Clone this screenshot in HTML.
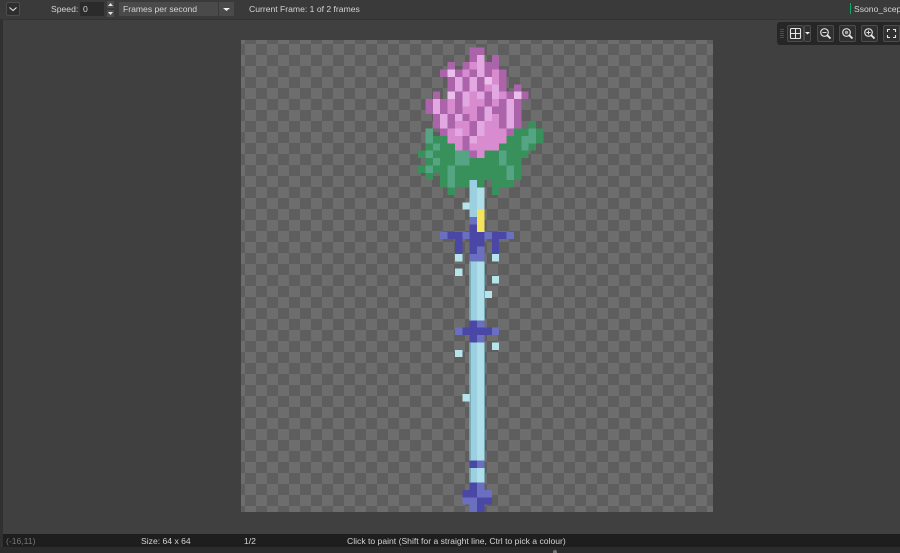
<!DOCTYPE html>
<html><head><meta charset="utf-8"><style>
html,body{margin:0;padding:0}
body{width:900px;height:553px;position:relative;overflow:hidden;background:#404040;font:8.6px "Liberation Sans",sans-serif;color:#d4d4d4}
.a{position:absolute}
.t{position:absolute;white-space:nowrap;line-height:12px}
.btn{position:absolute;box-sizing:border-box;border:1px solid #4c4c4c;border-radius:2px;background:#303030}
.e{position:absolute;width:1px;background:#7aabb8}
svg{position:absolute;display:block}
</style></head><body>
<div class="a" style="left:0;top:0;width:3px;height:553px;background:#303030"></div>
<div class="a" style="left:0;top:0;width:900px;height:19px;background:#3a3a3a"></div>
<div class="a" style="left:0;top:19px;width:900px;height:1px;background:#333"></div>

<div class="btn" style="left:6px;top:2px;width:14px;height:14px;background:#2e2e2e"></div>
<svg style="left:6px;top:2px" width="14" height="14"><path d="M3.500 5.500l3.500 3 3.500-3" fill="none" stroke="#e4e4e4" stroke-width="1.100"/></svg>
<div class="t" style="left:51px;top:3px">Speed:</div>
<div class="a" style="left:80px;top:2px;width:24px;height:14px;background:#2b2b2b;border-radius:1px"></div>
<div class="t" style="left:83px;top:3px">0</div>
<svg style="left:106px;top:1px" width="9" height="16"><rect x="1" width="7" height="7" y="0" fill="#4c4c4c"/><rect x="1" width="7" height="7" y="9" fill="#4c4c4c"/><path d="M2 5l2.500-3 2.500 3zM2 11h5l-2.500 3z" fill="#e4e4e4"/></svg>
<div class="a" style="left:119px;top:2px;width:99px;height:14px;background:#4a4a4a;border-radius:1px"></div>
<div class="t" style="left:123px;top:3px">Frames per second</div>
<div class="a" style="left:219px;top:2px;width:15px;height:14px;background:#4a4a4a;border-radius:1px"></div>
<svg style="left:219px;top:2px" width="15" height="14"><path d="M4 6h7L7.500 9z" fill="#eee"/></svg>
<div class="t" style="left:249px;top:3px">Current Frame: 1 of 2 frames</div>
<div class="a" style="left:850px;top:3px;width:1px;height:11px;background:#0fa86b"></div>
<div class="t" style="left:854px;top:3px">Ssono_sceptre</div>

<div class="a" style="left:777px;top:22px;width:123px;height:23px;background:#262626;border-radius:3px 0 0 3px"></div>
<svg style="left:780px;top:29px" width="4" height="9"><path d="M0 .5h4M0 2.500h4M0 4.500h4M0 6.500h4M0 8.500h4" stroke="#4c4c4c"/></svg>
<div class="btn" style="left:787px;top:25px;width:17px;height:17px"></div>
<div class="btn" style="left:804px;top:25px;width:7px;height:17px"></div>
<svg style="left:787px;top:25px" width="24" height="17"><rect x="3.500" y="3.500" width="10" height="10" rx="1" fill="none" stroke="#e6e6e6" stroke-width="1.100"/><path d="M8.500 3.500v10M3.500 8.500h10" fill="none" stroke="#e6e6e6" stroke-width="1.100"/><path d="M18 7h5l-2.500 2.500z" fill="#eee"/></svg>
<div class="btn" style="left:817px;top:25px;width:17px;height:17px"></div>
<div class="btn" style="left:839px;top:25px;width:17px;height:17px"></div>
<div class="btn" style="left:861px;top:25px;width:17px;height:17px"></div>
<div class="btn" style="left:883px;top:25px;width:17px;height:17px"></div>
<svg style="left:817px;top:25px" width="17" height="17"><circle cx="7.500" cy="7.500" r="3.800" fill="none" stroke="#ddd" stroke-width="1.200"/><path d="M10 10l3.500 3.500" stroke="#eee" stroke-width="1.800"/><path d="M5.500 7.500h4" stroke="#ddd"/></svg>
<svg style="left:839px;top:25px" width="17" height="17"><circle cx="7.500" cy="7.500" r="3.800" fill="none" stroke="#ddd" stroke-width="1.200"/><path d="M10 10l3.500 3.500" stroke="#eee" stroke-width="1.800"/><circle cx="7.500" cy="7.500" r="1.700" fill="#aaa"/></svg>
<svg style="left:861px;top:25px" width="17" height="17"><circle cx="7.500" cy="7.500" r="3.800" fill="none" stroke="#ddd" stroke-width="1.200"/><path d="M10 10l3.500 3.500" stroke="#eee" stroke-width="1.800"/><path d="M5.500 7.500h4M7.500 5.500v4" stroke="#ddd"/></svg>
<svg style="left:883px;top:25px" width="17" height="17"><path d="M4.500 7V4.500H7M10 4.500h2.500V7M12.500 10v2.500H10M7 12.500H4.500V10" fill="none" stroke="#e4e4e4" stroke-width="1.100"/></svg>

<div class="a" style="left:241px;top:40px;width:472px;height:472px;background:conic-gradient(#6d6d6d 25%,#5e5e5e 0 50%,#6d6d6d 0 75%,#5e5e5e 0) -7px 4px/22px 22px"></div>
<svg style="left:241px;top:40px;filter:blur(.35px)" width="472" height="472" viewBox="0 0 64 64" shape-rendering="crispEdges" fill="none" stroke-width="1">
<path stroke="#ab64a9" d="M31 1.500h2M31 2.500h1M34 2.500h1M28 3.500h1M30 3.500h1M33 3.500h2M27 4.500h1M29 4.500h1M31 4.500h1M33 4.500h1M35 4.500h1M28 5.500h1M30 5.500h1M32 5.500h1M35 5.500h1M28 6.500h1M30 6.500h1M32 6.500h1M35 6.500h1M37 6.500h1M26 7.500h1M29 7.500h1M33 7.500h1M36 7.500h1M38 7.500h1M25 8.500h1M27 8.500h1M29 8.500h1M33 8.500h1M35 8.500h1M37 8.500h1M25 9.500h1M27 9.500h1M29 9.500h1M32 9.500h1M34 9.500h2M37 9.500h1M26 10.500h1M28 10.500h1M30 10.500h1M32 10.500h1M35 10.500h1M37 10.500h1M26 11.500h1M28 11.500h1M31 11.500h1M35 11.500h1M37 11.500h1M27 12.500h1M31 12.500h1M36 12.500h1M30 13.500h1M30 14.500h1M31 15.500h1"/>
<path stroke="#d88ccf" d="M31 3.500h1M30 4.500h1M34 4.500h1M34 5.500h1M33 6.500h1M31 7.500h1M35 7.500h1M28 8.500h1M31 8.500h2M34 8.500h1M28 9.500h1M30 9.500h2M31 10.500h1M34 10.500h1M29 11.500h2M33 11.500h2M28 12.500h1M30 12.500h1M33 12.500h3M28 13.500h2M32 13.500h4M29 14.500h1M31 14.500h4M32 15.500h1"/>
<path stroke="#e2a8e2" d="M32 2.500h1M32 3.500h1M32 4.500h1M29 5.500h1M31 5.500h1M29 6.500h1M31 6.500h1M34 6.500h1M30 7.500h1M32 7.500h1M34 7.500h1M26 8.500h1M30 8.500h1M36 8.500h1M26 9.500h1M33 9.500h1M36 9.500h1M27 10.500h1M29 10.500h1M33 10.500h1M36 10.500h1M27 11.500h1M32 11.500h1M36 11.500h1M29 12.500h1M32 12.500h1M31 13.500h1"/>
<path stroke="#ebbfeb" d="M28 4.500h1M33 5.500h1M28 7.500h1M37 7.500h1"/>
<path stroke="#38905a" d="M39 11.500h1M37 12.500h2M40 12.500h1M26 13.500h2M36 13.500h2M40 13.500h1M25 14.500h1M27 14.500h2M35 14.500h3M39 14.500h1M24 15.500h1M26 15.500h3M33 15.500h2M36 15.500h3M25 16.500h1M27 16.500h2M31 16.500h4M36 16.500h2M24 17.500h1M26 17.500h2M29 17.500h7M37 17.500h1M25 18.500h1M27 18.500h1M29 18.500h7M37 18.500h1M27 19.500h1M29 19.500h2M32 19.500h1M34 19.500h3M28 20.500h1M34 20.500h1"/>
<path stroke="#55a585" d="M25 12.500h1M39 12.500h1M25 13.500h1M38 13.500h2M26 14.500h1M38 14.500h1M25 15.500h1M29 15.500h2M35 15.500h1M26 16.500h1M29 16.500h2M35 16.500h1M25 17.500h1M28 17.500h1M36 17.500h1M28 18.500h1M36 18.500h1M28 19.500h1"/>
<path stroke="#9ccfdf" d="M31.500 19v5M31.500 30v8M31.500 41v16M31.500 58v2"/>
<path stroke="#aedfe8" d="M32.500 20v3M32.500 30v8M32.500 41v16M32.500 58v2"/>
<path stroke="#b5e4ea" d="M30 22.500h1M29 29.500h1M34 29.500h1M29 31.500h1M34 32.500h1M33 34.500h1M34 41.500h1M29 42.500h1M30 48.500h1"/>
<path stroke="#f5e35c" d="M32.500 23v3"/>
<path stroke="#4a47a6" d="M31 25.500h1M28 26.500h2M31 26.500h2M34 26.500h2M29 27.500h1M31 27.500h2M34 27.500h1M29 28.500h1M31 28.500h1M34 28.500h1M31 38.500h1M30 39.500h4M31 40.500h1M31 57.500h1M31 60.500h1M30 61.500h2M32 62.500h2M32 63.500h1"/>
<path stroke="#6a70bf" d="M31 24.500h1M27 26.500h1M30 26.500h1M33 26.500h1M36 26.500h1M32 28.500h1M31 29.500h2M32 38.500h1M29 39.500h1M34 39.500h1M32 40.500h1M32 57.500h1M32 60.500h1M32 61.500h2M30 62.500h2M31 63.500h1"/>
</svg>
<div class="e" style="left:470px;top:262px;height:58px"></div>
<div class="e" style="left:484px;top:262px;height:58px"></div>
<div class="e" style="left:470px;top:343px;height:117px"></div>
<div class="e" style="left:484px;top:343px;height:117px"></div>
<div class="e" style="left:470px;top:468px;height:14px"></div>
<div class="e" style="left:484px;top:468px;height:14px"></div>

<div class="a" style="left:3px;top:534px;width:897px;height:13px;background:#1e1e1e"></div>
<div class="a" style="left:0;top:547px;width:900px;height:6px;background:#2c2c2c"></div>
<div class="a" style="left:553px;top:550px;width:4px;height:3px;background:#777;border-radius:2px 2px 0 0"></div>
<div class="t" style="left:6px;top:535px;color:#777">(-16,11)</div>
<div class="t" style="left:141px;top:535px">Size: 64 x 64</div>
<div class="t" style="left:244px;top:535px">1/2</div>
<div class="t" style="left:347px;top:535px">Click to paint (Shift for a straight line, Ctrl to pick a colour)</div>
</body></html>
